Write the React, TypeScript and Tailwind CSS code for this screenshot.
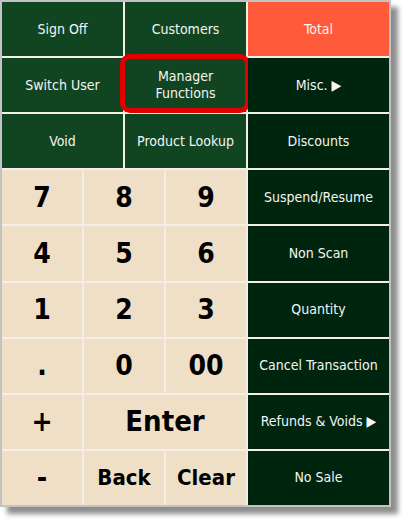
import type { ReactNode } from 'react';

type Tone = 'mid' | 'dark' | 'hot' | 'pad';

const toneClass: Record<Tone, string> = {
    mid: 'bg-[#114522] text-[#f4f4f4] text-[14px]',
    dark: 'bg-[#00250e] text-[#f4f4f4] text-[14px]',
    hot: 'bg-[#ff5b3b] text-[#fff4ee] text-[14px]',
    pad: 'bg-[#efdfc6] text-black font-bold',
};

function Key({ tone, children, className = '' }: { tone: Tone; children: ReactNode; className?: string }) {
    return (
        <div className={`relative flex items-center justify-center text-center leading-[17px] ${toneClass[tone]} ${className}`}>
            {children}
        </div>
    );
}

export default function App() {
    return (
        <div className="h-[522px] w-[406px] bg-white" style={{ fontFamily: "Tahoma, 'DejaVu Sans Condensed', 'DejaVu Sans', sans-serif" }}>
            <div className="h-[507px] w-[391px] border-2 border-[#c3c3c3] bg-[#f3efe8] shadow-[7px_7px_5px_rgba(0,0,0,0.45)]">
                <div className="grid h-full grid-rows-9 gap-[2px]">
                    <div className="grid grid-cols-[1fr_1fr_141px] gap-[2px]">
                        <Key tone="mid">Sign Off</Key>
                        <Key tone="mid">Customers</Key>
                        <Key tone="hot">Total</Key>
                    </div>
                    <div className="grid grid-cols-[1fr_1fr_141px] gap-[2px]">
                        <Key tone="mid">Switch User</Key>
                        <Key tone="mid">
                            <span>
                                Manager
                                <br />
                                Functions
                            </span>
                            {/* callout ring */}
                            <div className="absolute -left-[5px] -right-[4px] -top-[4px] -bottom-[1px] rounded-[10px] border-[5px] border-[#e00000]" />
                        </Key>
                        <Key tone="dark">Misc. ▶</Key>
                    </div>
                    <div className="grid grid-cols-[1fr_1fr_141px] gap-[2px]">
                        <Key tone="mid">Void</Key>
                        <Key tone="mid">Product Lookup</Key>
                        <Key tone="dark">Discounts</Key>
                    </div>
                    {[
                        ['7', '8', '9', 'Suspend/Resume'],
                        ['4', '5', '6', 'Non Scan'],
                        ['1', '2', '3', 'Quantity'],
                        ['.', '0', '00', 'Cancel Transaction'],
                    ].map((r) => (
                        <div key={r[3]} className="grid grid-cols-[1fr_1fr_1fr_141px] gap-[2px]">
                            <Key tone="pad" className="text-[28px]">{r[0]}</Key>
                            <Key tone="pad" className="text-[28px]">{r[1]}</Key>
                            <Key tone="pad" className="text-[28px]">{r[2]}</Key>
                            <Key tone="dark">{r[3]}</Key>
                        </div>
                    ))}
                    <div className="grid grid-cols-[1fr_1fr_1fr_141px] gap-[2px]">
                        <Key tone="pad" className="text-[28px]">+</Key>
                        <Key tone="pad" className="col-span-2 text-[29px]">Enter</Key>
                        <Key tone="dark">Refunds &amp; Voids ▶</Key>
                    </div>
                    <div className="grid grid-cols-[1fr_1fr_1fr_141px] gap-[2px]">
                        <Key tone="pad" className="text-[28px]">-</Key>
                        <Key tone="pad" className="text-[22px]">Back</Key>
                        <Key tone="pad" className="text-[22px]">Clear</Key>
                        <Key tone="dark">No Sale</Key>
                    </div>
                </div>
            </div>
        </div>
    );
}
